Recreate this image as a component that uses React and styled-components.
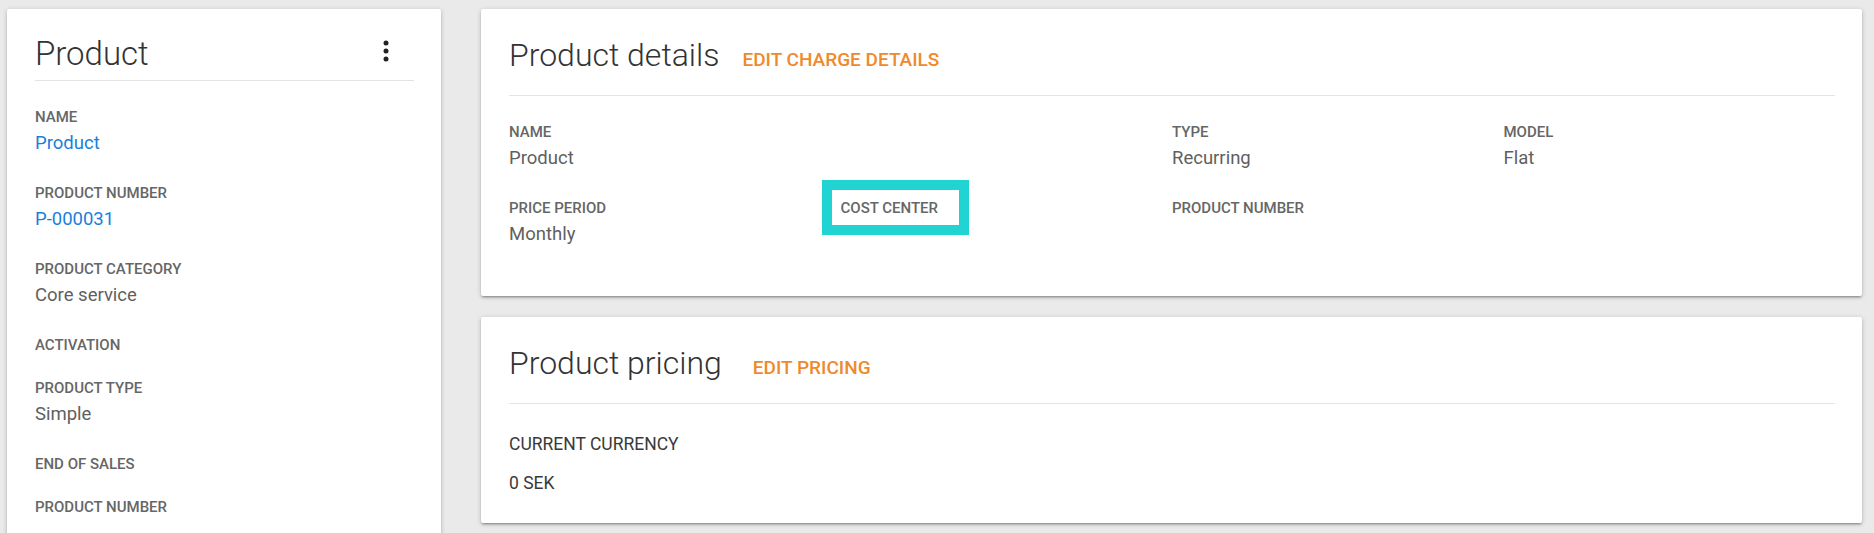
import React from 'react';
import styled, { createGlobalStyle } from 'styled-components';

const GlobalStyle = createGlobalStyle`
  html, body {
    margin: 0;
    padding: 0;
    overflow: hidden;
    background: #eaeaea;
    font-family: Roboto, "Liberation Sans", Arial, sans-serif;
  }
`;

const Page = styled.div`
  display: grid;
  grid-template-columns: 434px 1fr;
  column-gap: 40px;
  padding: 9px 12px 0 7px;
  align-items: start;
`;

const Card = styled.section`
  background: #fff;
  border-radius: 2px;
  box-shadow: 0 2px 2px 0 rgba(0, 0, 0, 0.14), 0 3px 1px -2px rgba(0, 0, 0, 0.12),
    0 1px 5px 0 rgba(0, 0, 0, 0.2);
`;

const SideCard = styled(Card)`
  padding: 25px 27px 80px 28px;
`;

const Column = styled.div`
  display: flex;
  flex-direction: column;
  gap: 21px;
`;

const MainCard = styled(Card)`
  padding: 26px 27px ${(p) => p.$bottom}px 28px;
`;

const SideHeader = styled.header`
  display: flex;
  justify-content: space-between;
  align-items: flex-start;
  padding-bottom: 6px;
  border-bottom: 1px solid #e3e3e3;
`;

const Header = styled.header`
  display: flex;
  align-items: baseline;
  padding-bottom: 20px;
  border-bottom: 1px solid #e3e3e3;
`;

const Title = styled.h2`
  margin: 0;
  font-size: ${(p) => p.$size || 32}px;
  line-height: 40px;
  font-weight: 300;
  color: #333;
`;

const EditLink = styled.a`
  margin-left: ${(p) => p.$gap}px;
  font-size: 19px;
  font-weight: 500;
  color: #ef8a2b;
  text-transform: uppercase;
  text-decoration: none;
  cursor: pointer;
`;

const MenuButton = styled.button`
  display: flex;
  padding: 0;
  margin: 5px 16px 0 0;
  border: 0;
  background: none;
  color: #222;
  cursor: pointer;
`;

const FieldList = styled.div`
  padding-top: 26px;
`;

const FieldGrid = styled.div`
  display: grid;
  grid-template-columns: repeat(4, 1fr);
  padding-top: 26px;
`;

const Field = styled.div`
  position: relative;
  margin-bottom: 23px;
`;

const Label = styled.div`
  font-size: 15px;
  line-height: 20px;
  font-weight: 500;
  color: #666;
  text-transform: uppercase;
`;

const Value = styled.div`
  padding: 2px 0 3px;
  font-size: 18.5px;
  line-height: 28px;
  color: ${(p) => (p.$link ? '#1a7fdc' : '#5f5f5f')};
`;

const Highlight = styled.span`
  position: absolute;
  left: -19px;
  top: -18px;
  width: 147px;
  height: 55px;
  box-sizing: border-box;
  border: 10px solid #22d3d3;
  pointer-events: none;
`;

const PricingBody = styled.div`
  padding-top: 28px;
  display: flex;
  flex-direction: column;
  gap: 15px;
`;

const PlainText = styled.div`
  font-size: 17.5px;
  line-height: 24px;
  color: #3a3a3a;
`;

const MoreVert = () => (
  <svg width="24" height="24" viewBox="0 0 24 24" fill="currentColor">
    <circle cx="12" cy="4" r="2.5" />
    <circle cx="12" cy="12" r="2.5" />
    <circle cx="12" cy="20" r="2.5" />
  </svg>
);

const sideFields = [
  { label: 'Name', value: 'Product', link: true },
  { label: 'Product number', value: 'P-000031', link: true },
  { label: 'Product category', value: 'Core service' },
  { label: 'Activation' },
  { label: 'Product type', value: 'Simple' },
  { label: 'End of sales' },
  { label: 'Product number' },
];

const detailFields = [
  { label: 'Name', value: 'Product' },
  null,
  { label: 'Type', value: 'Recurring' },
  { label: 'Model', value: 'Flat' },
  { label: 'Price period', value: 'Monthly' },
  { label: 'Cost center', highlight: true },
  { label: 'Product number' },
];

function FieldItem({ field }) {
  if (!field) return <div />;
  return (
    <Field>
      {field.highlight && <Highlight />}
      <Label>{field.label}</Label>
      {field.value && <Value $link={field.link}>{field.value}</Value>}
    </Field>
  );
}

export default function App() {
  return (
    <>
      <GlobalStyle />
      <Page>
        <SideCard>
          <SideHeader>
            <Title $size={33}>Product</Title>
            <MenuButton aria-label="More">
              <MoreVert />
            </MenuButton>
          </SideHeader>
          <FieldList>
            {sideFields.map((f, i) => (
              <FieldItem key={i} field={f} />
            ))}
          </FieldList>
        </SideCard>

        <Column>
          <MainCard $bottom={22}>
            <Header>
              <Title>Product details</Title>
              <EditLink $gap={23}>Edit charge details</EditLink>
            </Header>
            <FieldGrid>
              {detailFields.map((f, i) => (
                <FieldItem key={i} field={f} />
              ))}
            </FieldGrid>
          </MainCard>

          <MainCard $bottom={28}>
            <Header>
              <Title>Product pricing</Title>
              <EditLink $gap={31}>Edit pricing</EditLink>
            </Header>
            <PricingBody>
              <PlainText>CURRENT CURRENCY</PlainText>
              <PlainText>0 SEK</PlainText>
            </PricingBody>
          </MainCard>
        </Column>
      </Page>
    </>
  );
}
